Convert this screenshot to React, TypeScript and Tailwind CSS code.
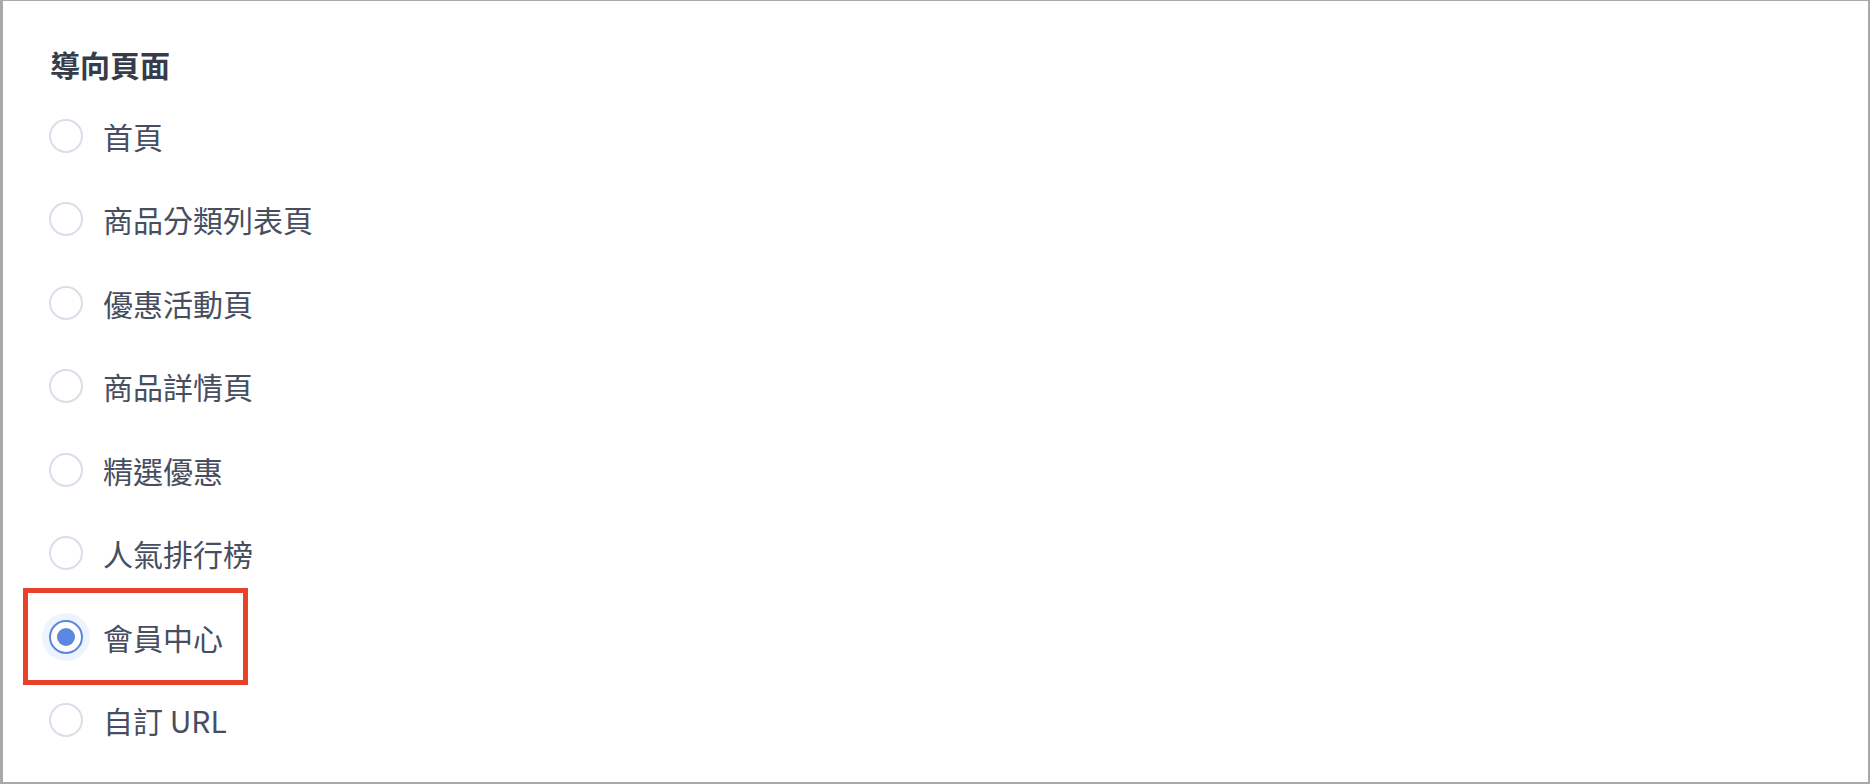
import React from "react"

const options = [
  "首頁",
  "商品分類列表頁",
  "優惠活動頁",
  "商品詳情頁",
  "精選優惠",
  "人氣排行榜",
  "會員中心",
  "自訂 URL",
]

const selected = "會員中心"

function Radio({ checked }: { checked: boolean }) {
  if (checked) {
    return (
      <span className="flex h-[34px] w-[34px] shrink-0 items-center justify-center rounded-full border-2 border-[#5b87e0] bg-white shadow-[0_0_0_7px_#eef4fe]">
        <span className="h-[18px] w-[18px] rounded-full bg-[#5b87e0]" />
      </span>
    )
  }
  return (
    <span className="h-[34px] w-[34px] shrink-0 rounded-full border-2 border-[#d8dfe8] bg-white" />
  )
}

export default function App() {
  return (
    <div className="box-border h-[784px] w-full border-t border-r-2 border-b-2 border-l-[3px] border-[#a9a9a9] bg-white font-['Noto_Sans_CJK_TC','Noto_Sans',sans-serif]">
      <div className="pt-[43px] pl-[46px]">
        <h2 className="ml-px h-[40px] text-[30px] leading-[40px] font-bold text-[#363c4a]">
          導向頁面
        </h2>
        <div className="mt-[10px] flex flex-col">
          {options.map((label) => {
            const checked = label === selected
            return (
              <label
                key={label}
                className="relative flex h-[83.5px] w-fit items-center gap-[20px]"
              >
                <Radio checked={checked} />
                <span className="text-[30px] leading-[40px] text-[#474e60]">
                  {label}
                </span>
                {checked && (
                  // highlight box drawn over the selected option
                  <span className="absolute -top-[7px] -bottom-[6px] left-[-26px] w-[225px] border-[5px] border-[#e8432a]" />
                )}
              </label>
            )
          })}
        </div>
      </div>
    </div>
  )
}
